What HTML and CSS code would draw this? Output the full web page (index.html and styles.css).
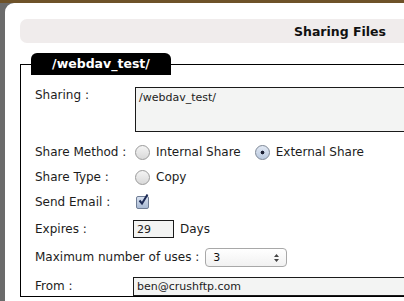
FILE: index.html
```html
<!DOCTYPE html>
<html>
<head>
<link rel="stylesheet" href="styles.css">
</head>
<body>

<!-- The dialog -->
<div class="dialog">

  <div class="dialog-title">Sharing Files</div>

  <fieldset class="share-box">
    <legend class="share-tab"><span class="share-tab-text">/webdav_test/</span></legend>

    <div class="row row-paths">
      <label class="label label-top">Sharing :</label>
      <textarea class="paths">/webdav_test/</textarea>
    </div>

    <div class="row row-method">
      <label class="label">Share Method :</label>
      <input type="radio" name="method" class="radio">
      <span class="opt">Internal Share</span>
      <input type="radio" name="method" class="radio" checked>
      <span class="opt">External Share</span>
    </div>

    <div class="row">
      <label class="label">Share Type :</label>
      <input type="radio" name="type" class="radio">
      <span class="opt">Copy</span>
    </div>

    <div class="row">
      <label class="label">Send Email :</label>
      <span class="check">
        <svg width="15" height="16" viewBox="0 0 15 16">
          <path d="M3.5 8.5 L6 11.5 L11.5 2.5" fill="none" stroke="#1d2a55" stroke-width="2"/>
        </svg>
      </span>
    </div>

    <div class="row row-expires">
      <label class="label">Expires :</label>
      <input type="text" class="field days" value="29">
      <span class="unit">Days</span>
    </div>

    <div class="row row-uses">
      <label class="label label-wide">Maximum number of uses :</label>
      <div class="picker">
        <select class="uses">
          <option>3</option>
        </select>
        <svg class="picker-arrows" width="7" height="10" viewBox="0 0 7 10">
          <path d="M3.5 1 L6 4 H1 Z M3.5 9 L6 6 H1 Z" fill="#444"/>
        </svg>
      </div>
    </div>

    <div class="row row-from">
      <label class="label">From :</label>
      <input type="text" class="field from" value="ben@crushftp.com">
    </div>
  </fieldset>

</div>

</body>
</html>
```

FILE: styles.css
```css
/* page behind the dialog */
body {
    margin: 0;
    height: 301px;
    overflow: hidden;
    background-color: #6b6b6b;
    border-top: 3px solid #6e5229;
    font-family: "DejaVu Sans", Verdana, sans-serif;
    font-size: 12px;
    color: #1c1c1c;
}

/* The dialog */
.dialog {
    margin-left: 5px;
    width: 640px;
    height: 282px;
    overflow: hidden;
    background-color: #fff;
    border-top-left-radius: 9px;
    padding: 16px 0 0 15px;
}

.dialog-title {
    height: 24px;
    line-height: 25px;
    background-color: #f0ecec;
    border-radius: 7px;
    text-align: center;
    font-weight: bold;
    font-size: 12.5px;
    color: #111;
}

/* Share box */
.share-box {
    margin: 10px 0 0 0;
    padding: 1px 0 0 14px;
    border: 1px solid #000;
    border-right: none;
    min-width: 0;
}

.share-tab {
    text-align: left;
    margin-left: -4px;
    padding: 0;
    width: 140px;
    height: 22px;
    background-color: #000;
    border-radius: 6px 6px 0 0;
}

.share-tab-text {
    display: block;
    line-height: 22px;
    text-align: center;
    color: #fff;
    font-weight: bold;
    font-size: 12.5px;
}

.row {
    display: flex;
    align-items: center;
    height: 20px;
    margin-top: 5px;
}

.row-paths {
    align-items: flex-start;
    height: auto;
    margin-top: 11px;
}

.row-method { margin-top: 10px; }
.row-expires { margin-top: 7px; }
.row-uses { margin-top: 8px; }
.row-from { margin-top: 9px; }

.label {
    width: 98px;
    flex: none;
}

.label-top { padding-top: 1px; }

.label-wide {
    width: auto;
    margin-right: 6px;
}

.paths {
    margin: 0 0 0 2px;
    width: 320px;
    height: 45px;
    box-sizing: border-box;
    padding: 3px 3px;
    border: 1px solid #1a1a1a;
    background-color: #f3f4f3;
    font-family: "DejaVu Sans", Verdana, sans-serif;
    font-size: 11px;
    color: #222;
    resize: none;
}

/* aqua style radios and checkbox */
.radio {
    appearance: none;
    margin: 0 6px 0 2px;
    width: 15px;
    height: 15px;
    border-radius: 50%;
    border: 1px solid #9a9a9a;
    background: linear-gradient(#f4f4f4, #d9d9d9);
    box-sizing: border-box;
}

.radio:checked {
    border-color: #7d8796;
    background: radial-gradient(circle, #1b1f33 0 1.6px, transparent 2.2px),
                linear-gradient(#e2e9f4, #b9c8de);
}

.opt {
    margin-right: 12px;
}

.check {
    position: relative;
    margin-left: 3px;
    width: 13px;
    height: 13px;
    box-sizing: border-box;
    border: 1px solid #6f7d95;
    border-radius: 2px;
    background: linear-gradient(#d8e1ef, #a9bad4);
}

.check svg {
    position: absolute;
    left: -1px;
    top: -5px;
}

.field {
    margin: 0;
    height: 18px;
    box-sizing: border-box;
    padding: 0 3px;
    border: 1px solid #1a1a1a;
    background-color: #f3f4f3;
    font-family: "DejaVu Sans", Verdana, sans-serif;
    font-size: 11px;
    color: #222;
}

.days { width: 41px; }

.unit {
    margin-left: 6px;
}

.from {
    width: 320px;
    height: 19px;
}

.picker {
    position: relative;
}

.uses {
    appearance: none;
    margin: 0;
    width: 82px;
    height: 19px;
    padding: 0 7px;
    border: 1px solid #a8a8a8;
    border-radius: 4px;
    background: linear-gradient(#ffffff, #f1f1f1);
    font-family: "DejaVu Sans", Verdana, sans-serif;
    font-size: 11px;
    color: #111;
}

.picker-arrows {
    position: absolute;
    right: 7px;
    top: 5px;
}
```
